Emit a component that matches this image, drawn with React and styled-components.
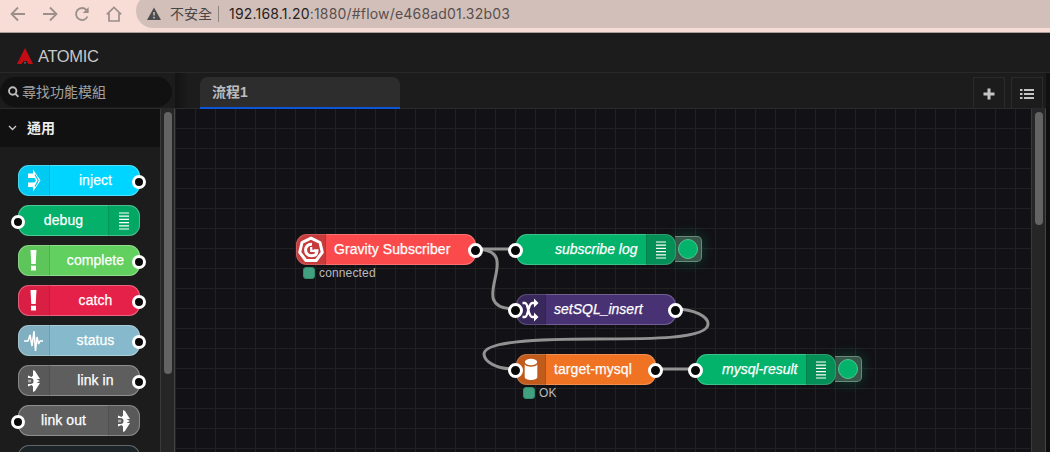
import React from 'react';
import styled, { createGlobalStyle, css } from 'styled-components';

const Global = createGlobalStyle`
  * { box-sizing: border-box; }
  html, body { margin: 0; height: 452px; overflow: hidden; background: #1c1c1c; }
  body { font-family: "Liberation Sans", "Noto Sans CJK TC", sans-serif; }
  svg { display: block; flex: none; }
`;

const Page = styled.div`
  width: 1050px;
  height: 452px;
  display: flex;
  flex-direction: column;
  overflow: hidden;
`;

const BrowserBar = styled.div`
  height: 33px;
  flex: none;
  display: flex;
  padding-left: 10px;
  background: #f7ddd5;
  border-bottom: 1px solid #a99c99;
  overflow: hidden;
`;

const NavIcons = styled.div`
  display: flex;
  align-items: center;
  gap: 16px;
  height: 28px;
  width: 126px;
`;

const AddressBar = styled.div`
  flex: 1;
  height: 34px;
  margin-top: -6px;
  padding: 6px 0 0 11px;
  display: flex;
  align-items: center;
  border-radius: 17px 0 0 17px;
  background: #d3bfb9;
  color: #4a4645;
`;

const AddressInner = styled.div`
  display: flex;
  align-items: center;
  height: 28px;
`;

const Unsafe = styled.span`
  margin-left: 9px;
  width: 42px;
  padding-bottom: 2px;
  white-space: nowrap;
  font: 14px/26px "Noto Sans CJK TC", sans-serif;
`;

const Divider = styled.span`
  width: 1px;
  height: 16px;
  margin: 0 10px 0 6px;
  background: #8d8380;
`;

const Url = styled.span`
  font: 14px/28px Inter, sans-serif;
  letter-spacing: 0.19px;
  color: #57504e;
  white-space: nowrap;
  b { font-weight: 400; color: #242222; }
`;

const Header = styled.header`
  height: 40px;
  flex: none;
  display: flex;
  align-items: center;
  gap: 5px;
  padding: 7px 0 0 17px;
  background: #1c1c1c;
  border-bottom: 1px solid #292929;
`;

const Brand = styled.span`
  font-size: 16.5px;
  letter-spacing: -0.35px;
  color: #c8c8c8;
`;

const Workspace = styled.div`
  flex: 1;
  display: flex;
  min-height: 0;
`;

const Palette = styled.aside`
  width: 175px;
  flex: none;
  display: flex;
  flex-direction: column;
  background: #1c1c1c;
`;

const SearchRow = styled.div`
  height: 36px;
  flex: none;
  padding-top: 4px;
  border-bottom: 1px solid #292929;
`;

const Search = styled.div`
  width: 172px;
  height: 30px;
  display: flex;
  align-items: center;
  gap: 3px;
  padding-left: 8px;
  border-radius: 15px;
  background: #111;
  color: #a2a2a2;
  font: 14px/28px "Noto Sans CJK TC", sans-serif;
`;

const SearchText = styled.span`
  padding-bottom: 2px;
`;

const PaletteBody = styled.div`
  flex: 1;
  display: flex;
  min-height: 0;
`;

const Categories = styled.div`
  width: 160px;
  overflow: hidden;
`;

const CategoryTitle = styled.div`
  height: 38px;
  display: flex;
  align-items: center;
  gap: 10px;
  padding: 0 0 0 8px;
  background: #111;
  color: #eee;
  font: bold 14px/36px "Noto Sans CJK TC", sans-serif;
`;

const CategoryName = styled.span`
  padding-bottom: 2px;
`;

const NodeList = styled.div`
  display: flex;
  flex-direction: column;
  gap: 10px;
  padding: 18px 0 0 18px;
`;

const Scrollbar = styled.div`
  width: 15px;
  flex: none;
  padding: 3px 0 0 3px;
  background: #262626;
  border-left: 1px solid #3a3a3a;
  border-right: 1px solid #454545;
`;

const Thumb = styled.div`
  width: 8px;
  height: ${(p) => p.$height}px;
  border-radius: 4px;
  background: #636363;
`;

const Editor = styled.main`
  flex: 1;
  min-width: 0;
  display: flex;
  flex-direction: column;
`;

const Tabs = styled.div`
  height: 36px;
  flex: none;
  display: flex;
  align-items: flex-end;
  padding: 0 3px 0 25px;
  margin-right: 4px;
  background: linear-gradient(90deg, #131313 0, #1c1c1c 14px);
  border-bottom: 1px solid #292929;
  box-shadow: 4px 0 0 #111;
`;

const Tab = styled.div`
  position: relative;
  z-index: 1;
  width: 200px;
  height: 32px;
  margin-bottom: -1px;
  padding-left: 12px;
  border-radius: 8px 8px 0 0;
  background: linear-gradient(#2d2d2d 30px, #0957d6 30px);
  color: #bdbdbd;
  font: bold 14px/31px "Liberation Sans", "Noto Sans CJK TC", sans-serif;
`;

const TabButtons = styled.div`
  display: flex;
  gap: 6px;
  margin-left: auto;
`;

const TabButton = styled.div`
  width: 32px;
  height: 31px;
  display: flex;
  align-items: center;
  justify-content: center;
  padding-top: 2px;
  border: 1px solid #2b2b2b;
  border-bottom: 0;
`;

const EditorBody = styled.div`
  flex: 1;
  display: flex;
  padding-right: 4px;
  background: #0e0e0e;
`;

const Canvas = styled.div`
  position: relative;
  flex: 1;
  overflow: hidden;
  background-color: #121116;
  background-image:
    linear-gradient(90deg, #212123 1px, transparent 1px),
    linear-gradient(#212123 1px, transparent 1px);
  background-size: 20px 20px;
  background-position: 0 -1px;
`;

const Wires = styled.svg`
  position: absolute;
  inset: 0;
`;

const Placed = styled.div`
  position: absolute;
  display: flex;
  align-items: center;
  left: ${(p) => p.$x - 175}px;
  top: ${(p) => p.$y - 109}px;
`;

const NodeBox = styled.div`
  position: relative;
  width: ${(p) => p.$width}px;
  height: 31px;
  margin-bottom: -1px;
  display: flex;
  flex-direction: ${(p) => (p.$iconRight ? 'row-reverse' : 'row')};
  border-radius: 11px;
  background: ${(p) => p.$color};
  box-shadow: inset 0 0 0 1px rgba(255, 255, 255, ${(p) => (p.$outline || 0.22)});
  color: #fff;
`;

const NodeIcon = styled.div`
  width: ${(p) => (p.$palette ? 32 : 30)}px;
  display: flex;
  align-items: center;
  justify-content: center;
  background: rgba(0, 0, 0, ${(p) => (p.$palette ? 0.05 : 0.2)});
  ${(p) => (p.$iconRight
    ? css`border-radius: 0 11px 11px 0; border-left: 1px solid rgba(0, 0, 0, 0.1); padding-right: 2px;`
    : css`border-radius: 11px 0 0 11px; border-right: 1px solid rgba(0, 0, 0, 0.1);`)}
`;

const NodeLabel = styled.div`
  flex: 1;
  text-align: ${(p) => p.$align};
  padding: ${(p) => p.$pad};
  font-size: 14px;
  line-height: 30px;
  font-style: ${(p) => (p.$italic ? 'italic' : 'normal')};
  letter-spacing: ${(p) => (p.$italic ? 0 : 0.07)}px;
  white-space: nowrap;
  -webkit-text-stroke: 0.25px #fff;
`;

const Port = styled.span`
  position: absolute;
  top: ${(p) => (p.$palette ? 10 : 8.5)}px;
  ${(p) => (p.$side === 'left' ? `left: ${p.$palette ? -7 : -8.5}px;` : `right: ${p.$palette ? -6 : -6.5}px;`)}
  width: ${(p) => (p.$palette ? 14 : 15)}px;
  height: ${(p) => (p.$palette ? 14 : 15)}px;
  border: 3px solid #fff;
  border-radius: 50%;
  background: #080808;
`;

const DebugButton = styled.div`
  width: 27px;
  height: 26px;
  margin-left: -1px;
  display: flex;
  align-items: center;
  padding-left: 3px;
  border: 1px solid rgba(160, 190, 170, 0.5);
  border-left: 0;
  border-radius: 0 5px 5px 0;
  background: #39564a;
  box-shadow: 0 0 14px rgba(0, 180, 110, 0.3);
`;

const DebugLamp = styled.span`
  width: 20px;
  height: 20px;
  border: 1px solid #4ec68f;
  border-radius: 50%;
  background: #04b36b;
`;

const StatusDot = styled.span`
  width: 12px;
  height: 12px;
  border-radius: 3px;
  background: #41a080;
  border: 1px solid #338b6c;
`;

const StatusText = styled.span`
  margin-left: 4px;
  font-size: 12px;
  line-height: 14px;
  letter-spacing: 0.15px;
  color: #bbb;
`;

const icons = {
  inject: (
    <svg width="14" height="23" viewBox="0 0 14 23" fill="none">
      <path d="M1 4.500h5V.5l7.500 11L6 22.500V18H1v-4.500h6.500l1.500-2-1.500-2.500H1z" fill="#fff" />
      <path d="M8 5.500l3.200 6L8 17.500" stroke="#00c9f2" strokeWidth="1.200" />
    </svg>
  ),
  debug: (
    <svg width="10" height="18" viewBox="0 0 10 18" stroke="#fff" strokeWidth="1.200">
      <path d="M0 1h10M0 4.200h10M0 7.400h10M0 10.600h10M0 13.800h10M0 17h10" />
    </svg>
  ),
  alert: (
    <svg width="7" height="21" viewBox="0 0 7 21" fill="#fff">
      <path d="M.5 0h6L5.700 14H1.300zM1 15.800h5v4.700H1z" />
    </svg>
  ),
  status: (
    <svg width="20" height="24" viewBox="0 0 20 24" fill="none" stroke="#fff" strokeWidth="1.500" strokeLinejoin="bevel">
      <path d="M0 12h4l2-6 2 11 2-15 1.500 20L13 8l1.600 7L16 12h3" />
    </svg>
  ),
  link: (
    <svg width="14" height="24" viewBox="0 0 14 24">
      <path d="M6 1l2 1 5 8-3.500.3 3.500 1.700-3.500 1.700 3.500.3L8 22l-2 1v-5.500l-1.500-1.500L1 17.500v-2.500h2.500a3 3 0 0 0 0-6H1V6.500L4.500 8 6 6.500z" fill="#fff" />
      <path d="M1 10.700h3.200v2.600H1z" fill="#fff" fillOpacity="0.5" />
    </svg>
  ),
  fn: (
    <svg width="17" height="24" viewBox="0 0 17 24">
      <path d="M.5 5H3c1.800 0 2.300 3 3.300 7s1.900 7 4 7h2.200M.5 19H3c1.800 0 2.300-3 3.300-7s1.900-7 4-7h2.200" fill="none" stroke="#fff" strokeWidth="2.400" />
      <path d="M12 .5v9L16.500 5zM12 14.500v9l4.500-4.500z" fill="#fff" />
    </svg>
  ),
  db: (
    <svg width="14" height="23" viewBox="0 0 14 23" fill="#fff">
      <ellipse cx="7" cy="4" rx="6.200" ry="3.200" />
      <path d="M.7 6.500c2 3 10.600 3 12.600 0V19c0 4-12.600 4-12.600 0z" />
    </svg>
  ),
  gravity: (
    <svg width="28" height="28" viewBox="0 0 28 28" fill="none">
      <path d="M14 2.200l9 4.300 2.300 9.800-6.200 8.200H8.900L2.700 16.300 5 6.500z" fill="#c63a3c" stroke="#fff" strokeWidth="3" strokeLinejoin="round" />
      <path d="M15 8.300c-8.500-.5-8.500 11.500-.5 11.500 3.500 0 5.500-2 5.500-5h-3" stroke="#fff" strokeWidth="3" />
      <path d="M14.200 11v3.800H18" stroke="#fff" strokeWidth="2.200" />
    </svg>
  ),
};

const paletteNodes = [
  { label: 'inject', color: '#00d5ff', icon: 'inject', port: 'right' },
  { label: 'debug', color: '#04b06a', icon: 'debug', port: 'left' },
  { label: 'complete', color: '#62d05e', icon: 'alert', port: 'right' },
  { label: 'catch', color: '#e62149', icon: 'alert', port: 'right' },
  { label: 'status', color: '#86b9cb', icon: 'status', port: 'right' },
  { label: 'link in', color: '#5e5e5e', icon: 'link', port: 'right' },
  { label: 'link out', color: '#5e5e5e', icon: 'link', port: 'left' },
  { label: '', color: '#1d2428' },
];

const flowNodes = [
  { x: 296, y: 234, width: 180, label: 'Gravity Subscriber', color: '#fb4a4b', icon: 'gravity', ports: ['right'], status: 'connected' },
  { x: 516, y: 234, width: 160, label: 'subscribe log', color: '#04b36b', icon: 'debug', ports: ['left'], italic: true, debug: true },
  { x: 516, y: 294, width: 160, label: 'setSQL_insert', color: '#483273', icon: 'fn', ports: ['left', 'right'], italic: true },
  { x: 516, y: 354, width: 140, label: 'target-mysql', color: '#f07223', icon: 'db', ports: ['left', 'right'], status: 'OK' },
  { x: 696, y: 354, width: 140, label: 'mysql-result', color: '#04b36b', icon: 'debug', ports: ['left'], italic: true, debug: true },
];

function PaletteNode({ label, color, icon, port }) {
  const iconRight = port === 'left';
  return (
    <NodeBox $width={122} $color={color} $iconRight={iconRight} $outline={0.3}>
      {icon && <NodeIcon $palette $iconRight={iconRight}>{icons[icon]}</NodeIcon>}
      <NodeLabel $align="center" $pad="0 0 0 1px">{label}</NodeLabel>
      {port && <Port $palette $side={port} />}
    </NodeBox>
  );
}

function FlowNode({ x, y, width, label, color, icon, ports, italic, debug, status }) {
  return (
    <>
      <Placed $x={x} $y={y}>
        <NodeBox $width={width} $color={color} $iconRight={debug}>
          <NodeIcon $iconRight={debug}>{icons[icon]}</NodeIcon>
          <NodeLabel $italic={italic} $align={debug ? 'right' : 'left'} $pad={debug ? '0 8.5px 0 0' : '0 0 0 8px'}>
            {label}
          </NodeLabel>
          {ports.map((side) => <Port key={side} $side={side} />)}
        </NodeBox>
        {debug && <DebugButton><DebugLamp /></DebugButton>}
      </Placed>
      {status && (
        <Placed $x={x + 7} $y={y + 32}>
          <StatusDot />
          <StatusText>{status}</StatusText>
        </Placed>
      )}
    </>
  );
}

export default function App() {
  return (
    <Page>
      <Global />
      <BrowserBar>
        <NavIcons>
          <svg width="16" height="16" viewBox="0 0 16 16" fill="none" stroke="#9c8f8b" strokeWidth="1.800"><path d="M15 8H2M8 1.500L1.500 8 8 14.500" /></svg>
          <svg width="16" height="16" viewBox="0 0 16 16" fill="none" stroke="#9c8f8b" strokeWidth="1.800"><path d="M1 8h13M8 1.500L14.500 8 8 14.500" /></svg>
          <svg width="16" height="16" viewBox="0 0 16 16" fill="none" stroke="#9c8f8b" strokeWidth="1.800"><path d="M13.500 10.500A6 6 0 1 1 12.500 4L14 6" /><path d="M14.600 1v6H8.700z" fill="#9c8f8b" stroke="none" /></svg>
          <svg width="16" height="16" viewBox="0 0 16 16" fill="none" stroke="#9c8f8b" strokeWidth="1.700"><path d="M.8 8.300L8 1.500l7.200 6.800M3 7v8h10V7" /></svg>
        </NavIcons>
        <AddressBar>
          <AddressInner>
            <svg width="14" height="14" viewBox="0 0 14 14"><path d="M7 .5L14 13H0z" fill="#4c4b4d" /><path d="M7 5v3.500M7 9.800v1.600" stroke="#d3bfb9" strokeWidth="1.500" /></svg>
            <Unsafe>不安全</Unsafe>
            <Divider />
            <Url><b>192.168.1.20</b>:1880/#flow/e468ad01.32b03</Url>
          </AddressInner>
        </AddressBar>
      </BrowserBar>

      <Header>
        <svg width="16" height="16" viewBox="0 0 16 16"><path d="M8 0L16 16h-4.500L10 13H6l-1.500 3H0z" fill="#c50c14" /><path d="M5 8h6l2 7h-2.500L9.500 12h-3l-1 3H3z" fill="#c50c14" /><circle cx="8" cy="14.800" r="1" fill="#666" /></svg>
        <Brand>ATOMIC</Brand>
      </Header>

      <Workspace>
        <Palette>
          <SearchRow>
            <Search>
              <svg width="11" height="12" viewBox="0 0 11 12" fill="none" stroke="#bbb" strokeWidth="1.900"><circle cx="4.700" cy="5" r="3.700" /><path d="M7.400 7.800l3 3" /></svg>
              <SearchText>尋找功能模組</SearchText>
            </Search>
          </SearchRow>
          <PaletteBody>
            <Categories>
              <CategoryTitle>
                <svg width="9" height="6" viewBox="0 0 9 6" fill="none" stroke="#ccc" strokeWidth="1.300"><path d="M1 1l3.500 3.500L8 1" /></svg>
                <CategoryName>通用</CategoryName>
              </CategoryTitle>
              <NodeList>
                {paletteNodes.map((node, i) => <PaletteNode key={i} {...node} />)}
              </NodeList>
            </Categories>
            <Scrollbar><Thumb $height={262} /></Scrollbar>
          </PaletteBody>
        </Palette>

        <Editor>
          <Tabs>
            <Tab>流程1</Tab>
            <TabButtons>
              <TabButton>
                <svg width="12" height="12" viewBox="0 0 12 12" stroke="#c4c4c4" strokeWidth="3"><path d="M6 .5v11M.5 6h11" /></svg>
              </TabButton>
              <TabButton>
                <svg width="14" height="12" viewBox="0 0 14 12" stroke="#c4c4c4" strokeWidth="2"><path d="M0 2h2.500M4 2h10M0 6h2.500M4 6h10M0 10h2.500M4 10h10" /></svg>
              </TabButton>
            </TabButtons>
          </Tabs>
          <EditorBody>
            <Canvas>
              <Wires width="856" height="343" viewBox="175 109 856 343" fill="none" stroke="#929292" strokeWidth="3">
                <path d="M475 249H515" />
                <path d="M475 249C529 249 461 309 515 309" />
                <path d="M675 309C694 309 708 316.500 708 324C708 339 650 339 595 339C540 339 484 341 484 354C484 361.500 496 369 515 369" />
                <path d="M655 369H695" />
              </Wires>
              {flowNodes.map((node) => <FlowNode key={node.label} {...node} />)}
            </Canvas>
            <Scrollbar><Thumb $height={113} /></Scrollbar>
          </EditorBody>
        </Editor>
      </Workspace>
    </Page>
  );
}
